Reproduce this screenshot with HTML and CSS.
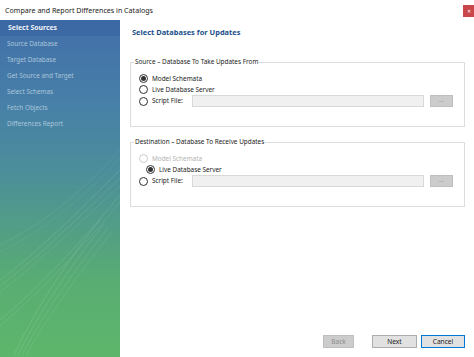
FILE: index.html
```html
<!DOCTYPE html>
<html>
<head>
<meta charset="utf-8">
<link rel="stylesheet" href="styles.css">
</head>
<body>
<div class="window">
  <div class="titlebar">
    <span class="title">Compare and Report Differences in Catalogs</span>
    <span class="close">&#x2715;</span>
  </div>
  <div class="content">
    <nav class="sidebar">
      <svg class="waves" width="120" height="337" viewBox="0 0 120 337">
        <g fill="none" stroke="#ffffff" stroke-width="0.6">
          <path d="M0 260 C40 230 80 190 120 150" opacity="0.18"/>
          <path d="M0 266 C40 236 80 196 120 158" opacity="0.16"/>
          <path d="M0 272 C40 242 82 200 120 166" opacity="0.14"/>
          <path d="M0 300 C35 270 75 230 120 175" opacity="0.18"/>
          <path d="M0 306 C35 276 76 236 120 182" opacity="0.15"/>
          <path d="M14 335 C30 300 60 250 100 200" opacity="0.2"/>
          <path d="M18 335 C34 302 64 254 104 204" opacity="0.18"/>
          <path d="M22 335 C38 304 68 258 108 208" opacity="0.16"/>
          <path d="M26 335 C42 306 72 262 112 212" opacity="0.14"/>
          <path d="M0 225 C40 205 80 175 120 130" opacity="0.12"/>
          <path d="M0 232 C40 212 80 182 120 138" opacity="0.1"/>
        </g>
      </svg>
      <div class="nav-item active">Select Sources</div>
      <div class="nav-item">Source Database</div>
      <div class="nav-item">Target Database</div>
      <div class="nav-item">Get Source and Target</div>
      <div class="nav-item">Select Schemas</div>
      <div class="nav-item">Fetch Objects</div>
      <div class="nav-item">Differences Report</div>
    </nav>
    <main class="main">
      <h1 class="heading">Select Databases for Updates</h1>
      <fieldset class="group first">
        <legend>Source – Database To Take Updates From</legend>
        <div class="row"><span class="radio checked"></span><span class="label">Model Schemata</span></div>
        <div class="row"><span class="radio"></span><span class="label">Live Database Server</span></div>
        <div class="row tall"><span class="radio"></span><span class="label fixed">Script File:</span><span class="field"></span><span class="browse">...</span></div>
      </fieldset>
      <fieldset class="group second">
        <legend>Destination – Database To Receive Updates</legend>
        <div class="row"><span class="radio disabled"></span><span class="label disabled">Model Schemata</span></div>
        <div class="row shift"><span class="radio checked"></span><span class="label">Live Database Server</span></div>
        <div class="row tall"><span class="radio"></span><span class="label fixed">Script File:</span><span class="field"></span><span class="browse">...</span></div>
      </fieldset>
      <div class="footer">
        <button class="btn back" disabled>Back</button>
        <button class="btn next">Next</button>
        <button class="btn cancel">Cancel</button>
      </div>
    </main>
  </div>
</div>
</body>
</html>
```
FILE: styles.css
```css
* { box-sizing: border-box; }
html, body { margin: 0; padding: 0; }
body {
  width: 474px;
  height: 357px;
  background: #ffffff;
  font-family: "Noto Sans", "Open Sans", sans-serif;
  color: #222222;
  overflow: hidden;
}
.window { display: flex; flex-direction: column; width: 474px; height: 357px; }
.titlebar {
  height: 20px;
  display: flex;
  align-items: center;
  justify-content: space-between;
  padding-left: 5px;
}
.title { font-size: 7.1px; color: #1a1a1a; line-height: 10px; }
.close {
  width: 11px;
  height: 12px;
  background: #c9474a;
  color: #ffffff;
  font-size: 5px;
  display: flex;
  align-items: center;
  justify-content: center;
  align-self: flex-start;
  margin-top: 5px;
}
.content { flex: 1; display: flex; }
.sidebar {
  position: relative;
  width: 120px;
  background: linear-gradient(180deg, #426fa9 0%, #4780a8 25%, #4c8e9a 45%, #529e85 62%, #59ad72 78%, #5db66b 100%);
  display: flex;
  flex-direction: column;
}
.waves { position: absolute; left: 0; top: 0; }
.nav-item {
  position: relative;
  height: 16px;
  line-height: 16px;
  padding-left: 7px;
  font-size: 6.4px;
  color: #a9c6da;
}
.nav-item.active {
  background: #3c68a4;
  color: #eef3fa;
  font-weight: bold;
  font-size: 6.9px;
  padding-left: 8px;
}
.main { flex: 1; display: flex; flex-direction: column; padding: 0 9px 9px 10px; }
.heading {
  margin: 7px 0 0 2px;
  font-size: 7.45px;
  line-height: 10px;
  font-weight: bold;
  color: #214f8c;
}
.group {
  margin: 20px 0 0 0;
  border: 1px solid #dcdcdc;
  padding: 6px 8px 19px 8px;
  min-width: 0;
}
.group.second { margin-top: 10px; }
.group legend {
  font-size: 6.4px;
  line-height: 10px;
  padding: 0 1px;
  margin-left: -5px;
  color: #222222;
}
.row {
  display: flex;
  align-items: center;
  height: 11px;
}
.row.tall { height: 12px; }
.row.shift { padding-left: 7px; }
.radio {
  width: 9px;
  height: 9px;
  border: 1px solid #333333;
  border-radius: 50%;
  background: #ffffff;
  display: flex;
  align-items: center;
  justify-content: center;
  flex: none;
}
.radio.checked::after {
  content: "";
  width: 5px;
  height: 5px;
  border-radius: 50%;
  background: #333333;
}
.radio.disabled { border-color: #cccccc; }
.label {
  margin-left: 4px;
  font-size: 6.4px;
  line-height: 10px;
  color: #222222;
}
.label.fixed { width: 40px; }
.label.disabled { color: #b3b3b3; }
.field {
  width: 232px;
  height: 12px;
  background: #f0f0f0;
  border: 1px solid #d9d9d9;
}
.browse {
  margin-left: 6px;
  width: 23px;
  height: 12px;
  background: #cccccc;
  border: 1px solid #bfbfbf;
  color: #8a8a8a;
  font-size: 6px;
  line-height: 8px;
  text-align: center;
}
.footer {
  margin-top: auto;
  display: flex;
  justify-content: flex-end;
  align-items: center;
}
.btn {
  height: 13px;
  padding: 0;
  margin: 0;
  font-family: "Noto Sans", "Open Sans", sans-serif;
  font-size: 6.6px;
  line-height: 11px;
  border: 1px solid #adadad;
  background: #e1e1e1;
  color: #1a1a1a;
}
.btn.back { width: 31px; background: #cccccc; border-color: #bfbfbf; color: #8c8c8c; margin-right: 18px; }
.btn.next { width: 45px; margin-right: 4px; }
.btn.cancel { width: 44px; border-color: #0078d7; }
```
